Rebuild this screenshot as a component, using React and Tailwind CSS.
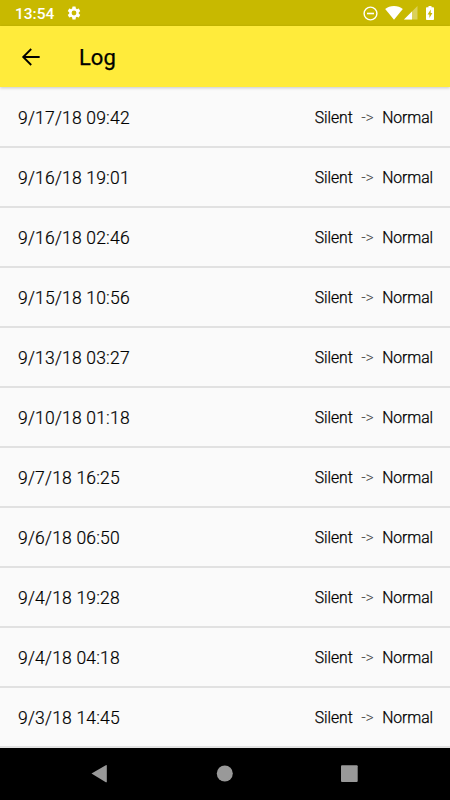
import React from "react";

const entries = [
    "9/17/18 09:42",
    "9/16/18 19:01",
    "9/16/18 02:46",
    "9/15/18 10:56",
    "9/13/18 03:27",
    "9/10/18 01:18",
    "9/7/18 16:25",
    "9/6/18 06:50",
    "9/4/18 19:28",
    "9/4/18 04:18",
    "9/3/18 14:45",
];

function StatusBar() {
    return (
        <div className="h-[26px] shrink-0 bg-[#c8b900] flex items-center justify-between pl-[15px] pr-[16px] text-white">
            <div className="flex items-center gap-[12px]">
                <span className="text-[15.5px] leading-none font-medium pt-[3px]">13:54</span>
                <svg className="w-[16px] h-[16px]" viewBox="0 0 24 24" fill="currentColor">
                    <path d="M19.14 12.94c.04-.3.06-.61.06-.94s-.02-.64-.07-.94l2.03-1.58a.49.49 0 0 0 .12-.61l-1.92-3.32a.49.49 0 0 0-.59-.22l-2.39.96a7 7 0 0 0-1.62-.94l-.36-2.54a.48.48 0 0 0-.48-.41h-3.84a.47.47 0 0 0-.47.41l-.36 2.54c-.59.24-1.13.57-1.62.94l-2.39-.96a.48.48 0 0 0-.59.22L2.74 8.87a.47.47 0 0 0 .12.61l2.03 1.58c-.05.3-.09.63-.09.94s.02.64.07.94l-2.03 1.58a.49.49 0 0 0-.12.61l1.92 3.32c.12.22.37.29.59.22l2.39-.96c.5.38 1.03.7 1.62.94l.36 2.54c.05.24.24.41.48.41h3.84c.24 0 .44-.17.47-.41l.36-2.54a7 7 0 0 0 1.62-.94l2.39.96c.22.08.47 0 .59-.22l1.92-3.32a.47.47 0 0 0-.12-.61zM12 15.6a3.6 3.6 0 1 1 0-7.2 3.6 3.6 0 0 1 0 7.2z" />
                </svg>
            </div>
            <div className="flex items-center">
                {/* Do not disturb */}
                <svg className="w-[15px] h-[15px] mr-[7px]" viewBox="0 0 15 15" fill="none" stroke="currentColor" strokeWidth="1.4">
                    <circle cx="7.5" cy="7.5" r="6.4" />
                    <path d="M4 7.5h7" strokeWidth="1.6" />
                </svg>
                {/* Wifi */}
                <svg className="w-[18px] h-[14px] mr-[1px]" viewBox="0 0 18 14" fill="currentColor">
                    <path d="M9 13.8L.2 3C2.5 1.1 5.5.1 9 .1s6.5 1 8.8 2.9z" />
                </svg>
                {/* Mobile signal */}
                <svg className="w-[14px] h-[14px] mr-[8px]" viewBox="0 0 14 14" fill="currentColor">
                    <path d="M0 13.5L13.5 0v13.5z" opacity=".35" />
                    <path d="M0 13.5L8 5.5v8z" />
                </svg>
                {/* Battery */}
                <svg className="w-[8px] h-[14px]" viewBox="0 0 8 14" fill="currentColor">
                    <path fillRule="evenodd" d="M2.5 0h3v1.3H7.2q.8 0 .8.8v11q0 .9-.8.9H.8q-.8 0-.8-.9v-11q0-.8.8-.8h1.7zM4.7 3.4L1.6 8.4h1.8v3.5L6.4 7H4.7z" />
                </svg>
            </div>
        </div>
    );
}

function AppBar() {
    return (
        <div className="relative z-10 h-[61px] shrink-0 bg-[#ffeb3b] flex items-center pl-[18px] shadow-[0_1px_3px_rgba(0,0,0,0.2)]">
            <svg className="w-[26px] h-[26px]" viewBox="0 0 24 24" fill="none" stroke="#000" strokeWidth="1.7">
                <path d="M20 12H5M12.2 4.6L4.8 12l7.4 7.4" />
            </svg>
            <h1 className="ml-[35px] text-[22px] leading-none font-normal text-black pt-[3px] [-webkit-text-stroke:0.25px_#000]">Log</h1>
        </div>
    );
}

function LogRow({ date }) {
    return (
        <div className="h-[60px] shrink-0 border-b-2 border-[#e1e1e1] flex items-center justify-between pl-[18px] pr-[17px]">
            <span className="pt-[2px] text-[17.5px] tracking-[0.2px] font-light text-black [-webkit-text-stroke:0.2px_#000]">{date}</span>
            <div className="flex items-center pt-[2px] text-[15.75px] tracking-[-0.08px] font-light text-black [-webkit-text-stroke:0.25px_#000]">
                <span>Silent</span>
                <span className="mx-[8.5px] text-[#444] [-webkit-text-stroke:0px]">-&gt;</span>
                <span>Normal</span>
            </div>
        </div>
    );
}

function NavBar() {
    return (
        <div className="h-[52px] shrink-0 bg-black">
            <svg className="w-[450px] h-[52px]" viewBox="0 0 450 52" fill="#999">
                <path d="M91.5 25.5L105.8 17.2q1-.5 1 .5v16q0 1-1 .5z" />
                <circle cx="224.8" cy="25.5" r="8" />
                <rect x="341" y="17.3" width="16.7" height="16.7" rx="1" />
            </svg>
        </div>
    );
}

export default function App() {
    return (
        <div className="w-[450px] h-[800px] flex flex-col overflow-hidden bg-[#fafafa] font-['Roboto',sans-serif]">
            <StatusBar />
            <AppBar />
            <div className="flex flex-col h-[661px] pt-px shrink-0">
                {entries.map((date) => (
                    <LogRow key={date} date={date} />
                ))}
            </div>
            <NavBar />
        </div>
    );
}
